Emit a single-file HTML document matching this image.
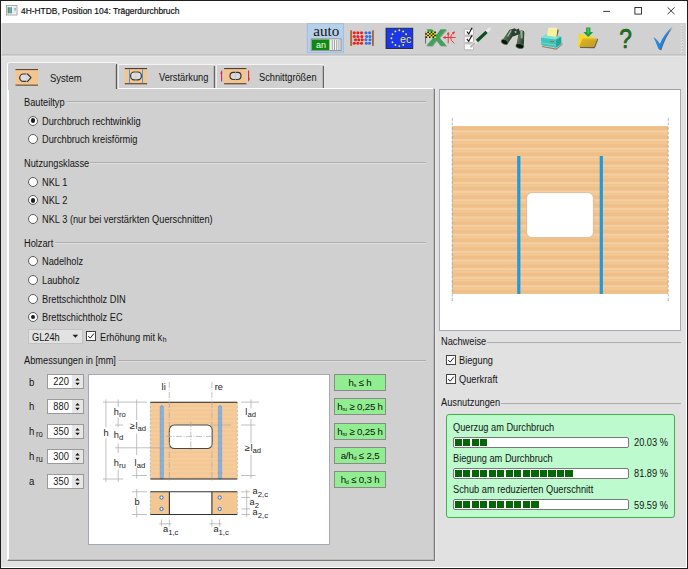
<!DOCTYPE html>
<html lang="de">
<head>
<meta charset="utf-8">
<title>4H-HTDB, Position 104: Trägerdurchbruch</title>
<style>
*{box-sizing:border-box;margin:0;padding:0}
html,body{width:688px;height:569px;overflow:hidden;background:#e1e1e1}
body{font-family:"Liberation Sans",sans-serif;font-size:9.24px;color:#151515;position:relative}
.abs{position:absolute}
.t{position:absolute;white-space:nowrap;line-height:11px;height:11px;font-size:10px;transform:scaleX(0.924);transform-origin:0 50%}
#win{position:absolute;left:0;top:0;width:688px;height:569px;background:#e1e1e1}
#titlebar{position:absolute;left:1px;top:1px;width:686px;height:22px;background:#fff}
#title{position:absolute;left:21px;top:5px;font-size:9.500px;line-height:12px;white-space:nowrap;color:#0a0a0a;transform-origin:0 0;transform:scaleX(0.885);-webkit-text-stroke:0.200px #111}
#toolbar{position:absolute;left:1px;top:23px;width:686px;height:31px;background:#d1d1d1}
#tbline{position:absolute;left:1px;top:54px;width:686px;height:3px;background:linear-gradient(180deg,#c1c1c1 0,#c1c1c1 1px,#d0d0d0 1px,#d0d0d0 2px,#e6e6e6 2px,#e6e6e6 3px)}
.bd{position:absolute;background:#1f1f1f}
.hl{position:absolute;background:#fff}
.grp{position:absolute;height:2px;background:linear-gradient(180deg,#adadad 0,#adadad 1px,#dedede 1px,#dedede 2px)}
.radio{position:absolute;width:10px;height:10px;border-radius:50%;border:1px solid #5c5c5c;background:#fff}
.radio.on::after{content:"";position:absolute;left:1.600px;top:1.600px;width:4.800px;height:4.800px;border-radius:50%;background:#1c1c1c}
.chk{position:absolute;width:10px;height:10px;border:1px solid #444;background:#fff}
.spin{position:absolute;left:47px;width:36.500px;height:14.500px;background:#fff;border:1px solid #9a9a9a}
.spin .v{position:absolute;right:13.400px;top:1.200px;font-size:10.700px;line-height:11px;transform:scaleX(0.870);transform-origin:100% 50%}
.spin .s{position:absolute;right:0;top:0;width:11px;height:12.500px;background:#e6e6e6}
.gbtn{position:absolute;left:334px;width:52px;height:17px;background:#90ee90;border:1px solid #8a8a8a;text-align:center;font-size:9.7px;line-height:15px;white-space:nowrap;color:#111;letter-spacing:-0.200px;word-spacing:0px}
.gbtn sub{font-size:5.5px;vertical-align:baseline;position:relative;top:1px}
.bar{position:absolute;left:453px;width:176px;height:11px;background:#fff;border:1px solid #787878;border-radius:2px}
.bar i{position:absolute;top:1px;left:1px;height:7px;background:repeating-linear-gradient(90deg,#056608 0,#056608 7px,transparent 7px,transparent 8.5px)}
</style>
</head>
<body>
<div id="win">
  <div id="titlebar"></div>
  <div id="title">4H-HTDB, Position 104: Trägerdurchbruch</div>
  <div id="toolbar"></div>
  <div id="tbline"></div>
  <div class="abs" style="left:1px;top:23px;width:1px;height:32px;background:#e6e6e6"></div>

  <!-- title icon -->
  <svg class="abs" style="left:6px;top:5px" width="12" height="11" viewBox="0 0 12 11">
    <rect x="0.5" y="0.5" width="10.5" height="9.5" fill="#f4f4f4" stroke="#9a9a9a" stroke-width="0.8"/>
    <rect x="1.600" y="2.200" width="2.200" height="6.200" fill="#4a9a70"/>
    <rect x="4.200" y="2.200" width="1.800" height="6.200" fill="#5a8fc4"/>
    <rect x="7" y="2.5" width="3" height="5.5" fill="#e8e8e8"/>
    <rect x="8.6" y="3" width="0.9" height="2.4" fill="#3aa35a"/>
  </svg>
  <!-- window controls -->
  <svg class="abs" style="left:596px;top:1px" width="90" height="22" viewBox="0 0 90 22">
    <path d="M7.2 10.4H14" stroke="#222" stroke-width="0.9" fill="none"/>
    <rect x="38.9" y="6.5" width="6.6" height="6.6" fill="none" stroke="#222" stroke-width="0.9"/>
    <path d="M71.6 6.4L78.6 13.2M78.6 6.4L71.6 13.2" stroke="#222" stroke-width="0.9" fill="none"/>
  </svg>

  <!-- tab panel -->
  <div class="abs" id="panel" style="left:7px;top:88px;width:428px;height:473px;background:#d0d0d0"></div>
  <div class="hl" style="left:7px;top:88px;width:426px;height:1px"></div>
  <div class="hl" style="left:7px;top:64px;width:1.5px;height:496px"></div>
  <div class="abs" style="left:433px;top:89px;width:1px;height:471px;background:#bcbcbc"></div>
  <div class="abs" style="left:434px;top:89px;width:1px;height:472px;background:#7a7a7a"></div>
  <div class="abs" style="left:435px;top:89px;width:1px;height:472px;background:#e8e8e8"></div>
  <div class="abs" style="left:8px;top:559px;width:426px;height:1px;background:#bcbcbc"></div>
  <div class="abs" style="left:8px;top:560px;width:427px;height:1px;background:#7a7a7a"></div>
  <!-- inactive tabs -->
  <div class="abs" style="left:118px;top:64px;width:98px;height:24px;background:#d0d0d0;border-top:1px solid #f4f4f4;border-left:1px solid #ececec;border-radius:2px 2px 0 0"></div>
  <div class="abs" style="left:214.300px;top:66px;width:1.100px;height:22px;background:#666"></div>
  <div class="abs" style="left:213.300px;top:66px;width:1px;height:22px;background:#b8b8b8"></div>
  <div class="abs" style="left:216px;top:64px;width:108px;height:24px;background:#d0d0d0;border-top:1px solid #f4f4f4;border-left:1px solid #ececec;border-radius:2px 2px 0 0"></div>
  <div class="abs" style="left:322.800px;top:66px;width:1.100px;height:22px;background:#666"></div>
  <div class="abs" style="left:321.800px;top:66px;width:1px;height:22px;background:#b8b8b8"></div>
  <!-- active tab -->
  <div class="abs" style="left:7px;top:62px;width:111px;height:28px;background:#d0d0d0;border-top:1px solid #f6f6f6;border-left:1.500px solid #fff;border-radius:3px 3px 0 0"></div>
  <div class="abs" style="left:116.300px;top:64px;width:1.200px;height:25px;background:#5a5a5a"></div>
  <div class="abs" style="left:115.300px;top:65px;width:1px;height:24px;background:#b8b8b8"></div>
  <!-- tab labels -->
  <div class="t" style="left:49.5px;top:73px;font-size:10.300px">System</div>
  <div class="t" style="left:159px;top:72px">Verstärkung</div>
  <div class="t" style="left:258.5px;top:72px">Schnittgrößen</div>
  <!-- tab icons -->
  <svg class="abs" style="left:15px;top:68px" width="24" height="19" viewBox="0 0 24 19">
    <rect x="0.5" y="1" width="22.5" height="16.6" fill="#f4c58e"/>
    <rect x="0.5" y="1" width="22.5" height="1.1" fill="#5a4a3a"/>
    <rect x="0.5" y="16.6" width="22.5" height="1.1" fill="#5a4a3a"/>
    <path d="M8.400 6h4.200l3.400 3.700-3.400 3.700H8.400a3.700 3.700 0 0 1 0-7.400z" fill="#dedede" stroke="#333" stroke-width="1.200" stroke-linejoin="round"/>
    <path d="M11.4 4.6v10.6" stroke="#c9c9c9" stroke-width="0.7"/>
  </svg>
  <svg class="abs" style="left:124px;top:67px" width="24" height="19" viewBox="0 0 24 19">
    <rect x="0.8" y="1" width="22.3" height="16.2" fill="#f4c58e"/>
    <rect x="0.8" y="1" width="22.3" height="1.1" fill="#4a4038"/>
    <rect x="0.8" y="16.2" width="22.3" height="1.1" fill="#4a4038"/>
    <path d="M5.500 2.200v14M18.500 2.200v14" stroke="#4a9be0" stroke-width="1"/>
    <rect x="6.600" y="5" width="10.800" height="7.800" rx="3.600" fill="#dedede" stroke="#333" stroke-width="1.150"/>
    <path d="M11.9 3.5v11" stroke="#bdbdbd" stroke-width="0.7"/>
  </svg>
  <svg class="abs" style="left:219px;top:67px" width="33" height="19" viewBox="0 0 33 19">
    <rect x="5.1" y="1" width="22.3" height="16.2" fill="#f4c58e"/>
    <rect x="5.1" y="1" width="22.3" height="1.1" fill="#4a4038"/>
    <rect x="5.1" y="16.2" width="22.3" height="1.1" fill="#4a4038"/>
    <rect x="11" y="5.300" width="11" height="7.200" rx="3.400" fill="#dadada" stroke="#333" stroke-width="1.150"/>
    <path d="M16.5 3.5v11" stroke="#bdbdbd" stroke-width="0.7"/>
    <path d="M2.6 14.5V4.5" stroke="#f02020" stroke-width="1.100"/>
    <path d="M3.100 2.800L1.200 6.800h1.900z" fill="#f02020"/>
    <path d="M29.6 3.5v10" stroke="#f02020" stroke-width="1.100"/>
    <path d="M29.100 15.200l1.900-4h-1.900z" fill="#f02020"/>
  </svg>

  <!-- left panel content -->
  <div class="t" style="left:23.5px;top:96.6px">Bauteiltyp</div>
  <div class="grp" style="left:66.5px;top:101.1px;width:359.500px"></div>
  <div class="t" style="left:23.5px;top:157.9px">Nutzungsklasse</div>
  <div class="grp" style="left:90px;top:162.4px;width:336px"></div>
  <div class="t" style="left:23.5px;top:237.6px">Holzart</div>
  <div class="grp" style="left:55px;top:242.1px;width:371px"></div>
  <div class="t" style="left:23.5px;top:355.3px">Abmessungen in [mm]</div>
  <div class="grp" style="left:118px;top:359.8px;width:308px"></div>
  <div class="radio on" style="left:28px;top:115.6px"></div><div class="t" style="left:42px;top:115.6px">Durchbruch rechtwinklig</div>
  <div class="radio" style="left:28px;top:134.1px"></div><div class="t" style="left:42px;top:134.1px">Durchbruch kreisförmig</div>
  <div class="radio" style="left:28px;top:177.0px"></div><div class="t" style="left:42px;top:177.0px">NKL 1</div>
  <div class="radio on" style="left:28px;top:195.4px"></div><div class="t" style="left:42px;top:195.4px">NKL 2</div>
  <div class="radio" style="left:28px;top:214.0px"></div><div class="t" style="left:42px;top:214.0px">NKL 3 (nur bei verstärkten Querschnitten)</div>
  <div class="radio" style="left:28px;top:256.4px"></div><div class="t" style="left:42px;top:256.4px">Nadelholz</div>
  <div class="radio" style="left:28px;top:275.0px"></div><div class="t" style="left:42px;top:275.0px">Laubholz</div>
  <div class="radio" style="left:28px;top:293.5px"></div><div class="t" style="left:42px;top:293.5px">Brettschichtholz DIN</div>
  <div class="radio on" style="left:28px;top:312.0px"></div><div class="t" style="left:42px;top:312.0px">Brettschichtholz EC</div>
  <div class="abs" style="left:28px;top:329px;width:55px;height:15px;background:#e2e2e2;border:1px solid #c2c2c2"></div>
  <div class="t" style="left:32px;top:331.7px">GL24h</div>
  <svg class="abs" style="left:72px;top:334px" width="7" height="5" viewBox="0 0 7 5"><path d="M0.6 0.8h5.6L3.4 3.8z" fill="#1a1a1a"/></svg>
  <div class="chk" style="left:86px;top:331px"></div>
  <svg class="abs" style="left:86px;top:331px" width="10" height="10" viewBox="0 0 10 10"><path d="M2.2 5l2 2.2 3.6-4.6" fill="none" stroke="#222" stroke-width="1"/></svg>
  <div class="t" style="left:100px;top:331.7px">Erhöhung mit k<span style="font-size:7.800px;position:relative;top:1.600px;margin-left:0.300px">h</span></div>
  <div class="t" style="left:28.5px;top:376.5px;font-size:10.400px">b</div>
  <div class="spin" style="top:374.3px"><span class="v">220</span><span class="s"><svg width="11" height="13" viewBox="0 0 11 13" style="position:absolute;left:0;top:-0.500px"><path d="M3.3 5.4L5.5 2.9 7.700 5.400zM3.300 7.800L5.500 10.300 7.700 7.800z" fill="#111"/></svg></span></div>
  <div class="t" style="left:28.5px;top:401.4px;font-size:10.400px">h</div>
  <div class="spin" style="top:399.2px"><span class="v">880</span><span class="s"><svg width="11" height="13" viewBox="0 0 11 13" style="position:absolute;left:0;top:-0.500px"><path d="M3.3 5.4L5.5 2.9 7.700 5.400zM3.300 7.800L5.500 10.300 7.700 7.800z" fill="#111"/></svg></span></div>
  <div class="t" style="left:28.5px;top:426.4px;font-size:10.400px">h<span style="font-size:8.300px;position:relative;top:1.300px;margin-left:1.800px">ro</span></div>
  <div class="spin" style="top:424.2px"><span class="v">350</span><span class="s"><svg width="11" height="13" viewBox="0 0 11 13" style="position:absolute;left:0;top:-0.500px"><path d="M3.3 5.4L5.5 2.9 7.700 5.400zM3.300 7.800L5.500 10.300 7.700 7.800z" fill="#111"/></svg></span></div>
  <div class="t" style="left:28.5px;top:451.3px;font-size:10.400px">h<span style="font-size:8.300px;position:relative;top:1.300px;margin-left:1.800px">ru</span></div>
  <div class="spin" style="top:449.1px"><span class="v">300</span><span class="s"><svg width="11" height="13" viewBox="0 0 11 13" style="position:absolute;left:0;top:-0.500px"><path d="M3.3 5.4L5.5 2.9 7.700 5.400zM3.300 7.800L5.500 10.300 7.700 7.800z" fill="#111"/></svg></span></div>
  <div class="t" style="left:28.5px;top:476.2px;font-size:10.400px">a</div>
  <div class="spin" style="top:474.0px"><span class="v">350</span><span class="s"><svg width="11" height="13" viewBox="0 0 11 13" style="position:absolute;left:0;top:-0.500px"><path d="M3.3 5.4L5.5 2.9 7.700 5.400zM3.300 7.800L5.500 10.300 7.700 7.800z" fill="#111"/></svg></span></div>
  <div class="gbtn" style="top:374.3px">h<sub>s</sub> ≤ h</div>
  <div class="gbtn" style="top:398.4px">h<sub>ru</sub> ≥ 0,25 h</div>
  <div class="gbtn" style="top:422.5px">h<sub>ro</sub> ≥ 0,25 h</div>
  <div class="gbtn" style="top:446.6px">a/h<sub>d</sub> ≤ 2,5</div>
  <div class="gbtn" style="top:470.7px">h<sub>d</sub> ≤ 0,3 h</div>

  <!-- diagram -->
  <svg class="abs" style="left:88px;top:374px" width="242" height="171" viewBox="88 374 242 171" font-family="Liberation Sans, sans-serif" fill="#222">
    <defs>
      <linearGradient id="lam" x1="0" y1="0" x2="0" y2="1">
        <stop offset="0" stop-color="#f2c692"/><stop offset="0.45" stop-color="#f6ce9f"/><stop offset="0.8" stop-color="#f4c997"/><stop offset="1" stop-color="#f2c692"/>
      </linearGradient>
      <pattern id="wood1" x="0" y="402" width="10" height="4.2" patternUnits="userSpaceOnUse">
        <rect x="0" y="0" width="10" height="4.2" fill="url(#lam)"/>
      </pattern>
    </defs>
    <rect x="88.5" y="374.5" width="241" height="170" fill="#fff" stroke="#a4aab4" stroke-width="1"/>
    <!-- elevation -->
    <rect x="150.4" y="402" width="86.9" height="77" fill="url(#wood1)"/>
    <path d="M150.4 402V479M237.3 402V479" stroke="#b4b4b4" stroke-width="0.8" stroke-dasharray="2.5 1.5" fill="none"/>
    <g stroke="#b0b0b0" stroke-width="0.8" fill="none">
      <path d="M103 402.1H147M103 479H123M132 475.500H147M115 425H123M115 447.800H170.600M211.500 425H231"/>
      <path d="M105.900 399.500V427.500M105.900 438.500V482M118.200 399.500V407M118.200 417.500V427M118.200 443.500V453M118.200 469.500V482M136.700 399.500V420M136.700 433.500V455M136.700 468V478.500"/>
      <path d="M241 402.100H259M241 425H255.500M241 475.500H255.500M251 399.500V408.500M251 419V443.500M251 454.500V478.500"/>
      <path d="M132 491.800H147M132 514.500H147M136.700 489V517.500"/>
      <path d="M241.400 491.800H250M241.400 497.500H250M241.400 508.900H250M241.400 514.500H250M246.700 489.500V517"/>
      <path d="M159.200 523.800H171.500M161.500 519.400V526.500M169.400 519.400V526.500"/>
      <path d="M209.400 523.800H221.700M211.900 519.400V526.500M219.600 519.400V526.500"/>
    </g>
    <!-- bars -->
    <rect x="160.2" y="405.6" width="3.2" height="73.400" rx="1.600" fill="#86b3e2" stroke="#4f86c2" stroke-width="0.700" stroke-dasharray="0.700 0.500"/>
    <rect x="218.400" y="405.600" width="3.200" height="73.400" rx="1.600" fill="#86b3e2" stroke="#4f86c2" stroke-width="0.700" stroke-dasharray="0.700 0.500"/>
    <path d="M150.400 402.200H237.300M150.400 479H237.300" stroke="#222" stroke-width="1.100" fill="none"/>
    <!-- hole -->
    <rect x="169.400" y="425" width="42.800" height="23.500" rx="5" fill="#fff" stroke="#4a4a4a" stroke-width="1.100"/>
    <g stroke="#a8a8a8" stroke-width="0.700" fill="none" stroke-dasharray="6 1.500 1 1.500">
      <path d="M169.300 382V482M211.900 382V482M166 436.400H215.500M190.800 421.500V450.500"/>
    </g>
    <!-- plan -->
    <rect x="150.400" y="491.800" width="19" height="22.700" fill="#f3c692"/>
    <rect x="211.900" y="491.800" width="25.400" height="22.700" fill="#f3c692"/>
    <path d="M150.400 491.800V514.500M237.300 491.800V514.500" stroke="#b4b4b4" stroke-width="0.800" stroke-dasharray="2.500 1.500" fill="none"/>
    <path d="M150.400 491.800H237.300M150.400 514.500H237.300M169.400 491.800V514.500M211.900 491.800V514.500" stroke="#333" stroke-width="1.100" fill="none"/>
    <g fill="#dfeaf8" stroke="#2f6ec2" stroke-width="0.950">
      <circle cx="161.500" cy="497.500" r="1.650"/><circle cx="161.500" cy="508.900" r="1.650"/>
      <circle cx="219.700" cy="497.500" r="1.650"/><circle cx="219.700" cy="508.900" r="1.650"/>
    </g>
    <!-- labels -->
    <g font-size="9.300" stroke="#fff" stroke-width="1.500" paint-order="stroke" stroke-linejoin="round">
      <text x="161.600" y="390.200">li</text>
      <text x="214.700" y="390.200">re</text>
      <text x="103.600" y="436">h</text>
      <text x="113.800" y="414.800">h<tspan font-size="7.700" dy="2.200">ro</tspan></text>
      <text x="113.800" y="437.600">h<tspan font-size="7.700" dy="2.200">d</tspan></text>
      <text x="113.800" y="465.500">h<tspan font-size="7.700" dy="2.200">ru</tspan></text>
      <text x="129.600" y="428.800">≥<tspan dx="0.800">l</tspan><tspan font-size="7.700" dy="2.200">ad</tspan></text>
      <text x="134.600" y="465.500">l<tspan font-size="7.700" dy="2.200">ad</tspan></text>
      <text x="245.300" y="414.800">l<tspan font-size="7.700" dy="2.200">ad</tspan></text>
      <text x="244.600" y="450.500">≥<tspan dx="0.800">l</tspan><tspan font-size="7.700" dy="2.200">ad</tspan></text>
      <text x="134.400" y="505.400">b</text>
      <text x="252.600" y="493.600">a<tspan font-size="7.700" dy="3">2,c</tspan></text>
      <text x="249.600" y="504.500">a<tspan font-size="7.700" dy="3">2</tspan></text>
      <text x="252.600" y="515.400">a<tspan font-size="7.700" dy="3">2,c</tspan></text>
      <text x="163" y="531.700">a<tspan font-size="7.700" dy="3">1,c</tspan></text>
      <text x="213.400" y="531.700">a<tspan font-size="7.700" dy="3">1,c</tspan></text>
    </g>
  </svg>

  <!-- preview -->
  <div class="abs" style="left:439px;top:89px;width:242px;height:242px;background:#fff;border:1px solid #a6aab2;border-top-color:#9a9ea6"></div>
  <div class="abs" style="left:452.3px;top:126.3px;width:215.9px;height:167.7px;background:repeating-linear-gradient(180deg,#f5cfa4 -3.25px,#f5cfa4 -2.45px,#ecc490 -1.65px,#f8c893 -0.35px,#f2c38d 0.65px,#eebf88 1.55px,#eebf88 3.65px,#f4cb9d 4.75px,#f5cfa4 5.35px)"></div>
  <svg class="abs" style="left:439px;top:89px" width="243" height="243" viewBox="439 89 243 243">
    <defs>
      <linearGradient id="lam2" x1="0" y1="0" x2="0" y2="1">
        <stop offset="0" stop-color="#f5cfa4"/><stop offset="0.09" stop-color="#f5cfa4"/><stop offset="0.19" stop-color="#ecc490"/><stop offset="0.34" stop-color="#f8c893"/><stop offset="0.46" stop-color="#f2c38d"/><stop offset="0.56" stop-color="#eebf88"/><stop offset="0.8" stop-color="#eebf88"/><stop offset="0.93" stop-color="#f4cb9d"/><stop offset="1" stop-color="#f5cfa4"/>
      </linearGradient>
      <pattern id="wood2" x="0" y="130.900" width="10" height="8.600" patternUnits="userSpaceOnUse">
        <rect x="0" y="0" width="10" height="8.600" fill="url(#lam2)"/>
      </pattern>
    </defs>
    <path d="M452.300 118V302M668.200 118V302" stroke="#9a9a9a" stroke-width="0.700" stroke-dasharray="3 1.500" fill="none"/>
    <rect x="517.200" y="156" width="3.200" height="138" fill="#1e9bdc"/>
    <rect x="599.700" y="156" width="3.200" height="138" fill="#1e9bdc"/>
    <rect x="526.600" y="192.600" width="66.800" height="45" rx="5.500" fill="#fff" stroke="#d8b48a" stroke-width="0.800"/>
  </svg>
  <!-- Nachweise -->
  <div class="t" style="left:441px;top:335.900px">Nachweise</div>
  <div class="grp" style="left:487px;top:341.500px;width:194px"></div>
  <div class="chk" style="left:446px;top:355px"></div>
  <svg class="abs" style="left:446px;top:355px" width="10" height="10" viewBox="0 0 10 10"><path d="M2.200 5l2 2.200 3.600-4.600" fill="none" stroke="#222" stroke-width="1"/></svg>
  <div class="t" style="left:458.500px;top:354.800px">Biegung</div>
  <div class="chk" style="left:446px;top:373.700px"></div>
  <svg class="abs" style="left:446px;top:373.700px" width="10" height="10" viewBox="0 0 10 10"><path d="M2.200 5l2 2.200 3.600-4.600" fill="none" stroke="#222" stroke-width="1"/></svg>
  <div class="t" style="left:458.500px;top:373.500px">Querkraft</div>
  <!-- Ausnutzungen -->
  <div class="t" style="left:441px;top:397px">Ausnutzungen</div>
  <div class="grp" style="left:501px;top:402.500px;width:180px"></div>
  <div class="abs" style="left:446px;top:414px;width:229px;height:104px;background:#bdfacd;border:1px solid #45b04a;border-radius:3px"></div>
  <div class="t" style="left:453px;top:422px">Querzug am Durchbruch</div>
  <div class="bar" style="top:437px"><i style="width:33.800px"></i></div>
  <div class="t" style="left:633.500px;top:437.300px">20.03 %</div>
  <div class="t" style="left:453px;top:453px">Biegung am Durchbruch</div>
  <div class="bar" style="top:468px"><i style="width:118.500px"></i></div>
  <div class="t" style="left:633.500px;top:468.300px">81.89 %</div>
  <div class="t" style="left:453px;top:484.200px">Schub am reduzierten Querschnitt</div>
  <div class="bar" style="top:499.300px"><i style="width:84.500px"></i></div>
  <div class="t" style="left:633.500px;top:499.600px">59.59 %</div>

  <!-- toolbar icons -->
  <svg class="abs" style="left:1px;top:23px" width="686" height="31" viewBox="1 23 686 31" font-family="Liberation Sans, sans-serif">
    <defs>
      <linearGradient id="gchk" x1="0" y1="0" x2="1" y2="1"><stop offset="0" stop-color="#29a8f8"/><stop offset="1" stop-color="#0f6fe0"/></linearGradient>
      <linearGradient id="gfold" x1="0" y1="0" x2="1" y2="1"><stop offset="0" stop-color="#dcb42c"/><stop offset="1" stop-color="#c39c18"/></linearGradient>
      <linearGradient id="gtube" x1="0" y1="0" x2="1" y2="0.300"><stop offset="0" stop-color="#2c4233"/><stop offset="0.400" stop-color="#56725e"/><stop offset="1" stop-color="#27382c"/></linearGradient>
    </defs>
    <!-- auto button -->
    <rect x="307.3" y="23.600" width="36.200" height="29" fill="#b7d0ea" stroke="#9cbfe3" stroke-width="1"/>
    <text x="313.300" y="35.800" font-family="Liberation Serif, serif" font-size="14" fill="#111" textLength="26" lengthAdjust="spacingAndGlyphs">auto</text>
    <rect x="311.200" y="38.900" width="29.800" height="11.700" fill="#f4f4f4" stroke="#8a8a8a" stroke-width="0.900"/>
    <rect x="311.800" y="39.500" width="17.600" height="10.500" fill="#0e8a10"/>
    <text x="316" y="47.600" font-size="9.300" fill="#f2fff2" textLength="10" lengthAdjust="spacingAndGlyphs">an</text>
    <path d="M332.300 40V50M334.500 40V50M336.700 40V50M338.900 40V50" stroke="#9a9a9a" stroke-width="0.900" fill="none"/>
    <!-- abacus -->
    <rect x="350.200" y="30.300" width="1.900" height="15.600" fill="#a8683a"/>
    <rect x="372" y="30.300" width="1.900" height="15.600" fill="#a8683a"/>
    <path d="M352 32.800H372M352 36.400H372M352 39.800H372M352 43.300H372" stroke="#c8a890" stroke-width="0.600"/>
    <circle cx="354.3" cy="32.8" r="1.500" fill="#f01c1c"/><circle cx="357.9" cy="32.8" r="1.500" fill="#f01c1c"/><circle cx="361.5" cy="32.8" r="1.500" fill="#f01c1c"/><circle cx="366" cy="32.8" r="1.500" fill="#2e70f2"/><circle cx="369.6" cy="32.8" r="1.500" fill="#2e70f2"/><circle cx="354.3" cy="36.4" r="1.500" fill="#f01c1c"/><circle cx="357.9" cy="36.4" r="1.500" fill="#f01c1c"/><circle cx="361.9" cy="36.4" r="1.500" fill="#f01c1c"/><circle cx="366.6" cy="36.4" r="1.500" fill="#2e70f2"/><circle cx="369.9" cy="36.4" r="1.500" fill="#2e70f2"/><circle cx="355.5" cy="39.8" r="1.500" fill="#f01c1c"/><circle cx="358.8" cy="39.8" r="1.500" fill="#f01c1c"/><circle cx="362.2" cy="39.8" r="1.500" fill="#f01c1c"/><circle cx="365.9" cy="39.8" r="1.500" fill="#2e70f2"/><circle cx="370" cy="39.8" r="1.500" fill="#2e70f2"/><circle cx="354.3" cy="43.3" r="1.500" fill="#f01c1c"/><circle cx="357.9" cy="43.3" r="1.500" fill="#f01c1c"/><circle cx="361.5" cy="43.3" r="1.500" fill="#f01c1c"/><circle cx="366.4" cy="43.3" r="1.500" fill="#2e70f2"/><circle cx="369.5" cy="43.3" r="1.500" fill="#2e70f2"/>
    <!-- EU flag -->
    <rect x="385.200" y="27.500" width="28.200" height="21.700" fill="#e9e9e9"/>
    <rect x="386" y="28.200" width="26.800" height="20.300" fill="#1c36ea" stroke="#20242c" stroke-width="0.900"/>
    <g fill="#f0f040"><circle cx="399.3" cy="30.3" r="0.95"/><circle cx="403.2" cy="31.4" r="0.95"/><circle cx="406.1" cy="34.2" r="0.95"/><circle cx="403.2" cy="45.0" r="0.95"/><circle cx="399.3" cy="46.1" r="0.95"/><circle cx="395.4" cy="45.0" r="0.95"/><circle cx="392.5" cy="42.2" r="0.95"/><circle cx="391.4" cy="38.2" r="0.95"/><circle cx="392.5" cy="34.2" r="0.95"/><circle cx="395.4" cy="31.4" r="0.95"/></g>
    <text x="400" y="42.800" font-size="11.600" fill="#eaea3c" textLength="11.200" lengthAdjust="spacingAndGlyphs">ec</text>
    <!-- green X -->
    <path d="M427.300 30h5.800l4.200 5.600 4.200-5.600h5.700l-7 8.300 7 8.300h-5.900l-4.100-5.600-4.200 5.600h-5.800l7.100-8.300z" fill="#868686" opacity="0.750"/>
    <path d="M426.400 29.200h5.800l4.200 5.600 4.200-5.600h5.700l-7 8.300 7 8.300h-5.900l-4.100-5.600-4.200 5.600h-5.800l7.100-8.300z" fill="#3fa258"/>
    <path d="M425.500 31.600V43.600" stroke="#555" stroke-width="0.800"/>
    <rect x="425.50" y="31.60" width="1.75" height="1.6" fill="#f4ec20"/><rect x="425.50" y="33.20" width="1.75" height="1.6" fill="#1a1a10"/><rect x="425.50" y="34.80" width="1.75" height="1.6" fill="#f4ec20"/><rect x="425.50" y="36.40" width="1.75" height="1.6" fill="#1a1a10"/><rect x="427.25" y="31.60" width="1.75" height="1.6" fill="#1a1a10"/><rect x="427.25" y="33.20" width="1.75" height="1.6" fill="#f4ec20"/><rect x="427.25" y="34.80" width="1.75" height="1.6" fill="#1a1a10"/><rect x="427.25" y="36.40" width="1.75" height="1.6" fill="#f4ec20"/><rect x="429.00" y="31.60" width="1.75" height="1.6" fill="#f4ec20"/><rect x="429.00" y="33.20" width="1.75" height="1.6" fill="#1a1a10"/><rect x="429.00" y="34.80" width="1.75" height="1.6" fill="#f4ec20"/><rect x="429.00" y="36.40" width="1.75" height="1.6" fill="#1a1a10"/><rect x="430.75" y="31.60" width="1.75" height="1.6" fill="#1a1a10"/><rect x="430.75" y="33.20" width="1.75" height="1.6" fill="#f4ec20"/><rect x="430.75" y="34.80" width="1.75" height="1.6" fill="#1a1a10"/><rect x="430.75" y="36.40" width="1.75" height="1.6" fill="#f4ec20"/><rect x="432.50" y="31.60" width="1.75" height="1.6" fill="#f4ec20"/><rect x="432.50" y="33.20" width="1.75" height="1.6" fill="#1a1a10"/><rect x="432.50" y="34.80" width="1.75" height="1.6" fill="#f4ec20"/><rect x="432.50" y="36.40" width="1.75" height="1.6" fill="#1a1a10"/><rect x="434.25" y="31.60" width="1.75" height="1.6" fill="#1a1a10"/><rect x="434.25" y="33.20" width="1.75" height="1.6" fill="#f4ec20"/><rect x="434.25" y="34.80" width="1.75" height="1.6" fill="#1a1a10"/><rect x="434.25" y="36.40" width="1.75" height="1.6" fill="#f4ec20"/>
    <g stroke="#f02828" stroke-width="0.900" fill="none">
      <path d="M444 37.500H455.600M448.200 33.500V43.300"/>
      <path d="M454.200 32.200Q450.600 34.500 450.600 37.500T454.200 43.300"/>
    </g>
    <path d="M442.600 37.500l3-1.500v3zM448.200 31.800l-1.400 2.800h2.800zM455 31.600l-2.900 0.600 1.800 2.200z" fill="#f02828"/>
    <!-- checklist -->
    <g fill="#fff" stroke="#adadad" stroke-width="0.800">
      <rect x="464.300" y="29.200" width="9.200" height="5.800" rx="0.800"/><rect x="464.300" y="36.700" width="9.200" height="5.600" rx="0.800"/><rect x="464.300" y="44" width="9.200" height="5.800" rx="0.800"/>
    </g>
    <path d="M466.800 31.500l1.900 2.400 3.400-6.200M466.800 38.800l1.900 2.400 3.400-6" stroke="#111" stroke-width="1.100" fill="none"/>
    <path d="M489.300 29.200L471.300 46.400" stroke="#e9e9e9" stroke-width="3" stroke-linecap="round"/>
    <path d="M474.500 43.300L471 46.600" stroke="#b9b0a8" stroke-width="1.800" stroke-linecap="round"/>
    <path d="M486.600 31.800L476.900 41" stroke="#0f4a20" stroke-width="3.200"/>
    <!-- binoculars -->
    <g stroke="#ddd6c8" stroke-width="1.300" stroke-linejoin="round">
      <path d="M508.900 29.300Q511 27.800 513.800 29.300L514.500 35L508.200 44.200Q503.500 44.500 501.200 40.600z" fill="url(#gtube)"/>
      <path d="M518.400 30.400Q521.500 28.600 524.600 30.800L525.300 34L524.200 47.300Q519.500 50 515.600 45.600z" fill="url(#gtube)"/>
    </g>
    <path d="M511.500 29.500l3-1.300 2 1.200 2.500-1 1 5.600-7 2.500z" fill="#2a4031"/>
    <path d="M514.300 31.600l1.800-0.900 0.800 1.600-1.600 0.900z" fill="#9fb8a6"/>
    <path d="M510.300 30.200l1.600 0.400-3.600 6.200-1.300-0.600zM520.300 30.600l2.200 0.200 0.200 7.500-1.900 0.100z" fill="#a9c4b0" opacity="0.800"/>
    <path d="M524.300 33.200l0.900 0.800-0.400 6-0.900-0.200z" fill="#c6d8cc" opacity="0.800"/>
    <ellipse cx="504.600" cy="42" rx="3.700" ry="2.300" transform="rotate(28 504.600 42)" fill="#0b130d" stroke="#5d8c62" stroke-width="0.600"/>
    <ellipse cx="519.800" cy="46.100" rx="4.100" ry="2.400" transform="rotate(12 519.800 46.100)" fill="#0b130d" stroke="#5d8c62" stroke-width="0.600"/>
    <!-- printer -->
    <path d="M542.300 46l13.800 2.600 5.600-4.200 0.200-3.500 0.600 3.900-6.200 4.900-14.300-2.700z" fill="#8e6a48" opacity="0.800"/>
    <path d="M541 38.400Q541 37.600 541.800 37.200L546.500 34.500L559.900 36.300Q561.400 36.700 561.300 38L561.200 43.600Q561.200 44.500 560.400 45L556.600 47.400Q555.800 47.800 554.800 47.600L542.600 45.500Q541.200 45.200 541.200 44z" fill="#3fc6bb"/>
    <path d="M541.200 37.700L546.600 34.500L560 36.400L556.200 39.400z" fill="#80e2da"/>
    <path d="M556.200 39.400L561.200 36.900L561.200 43.800L556.200 47.500z" fill="#2aa499"/>
    <path d="M541.400 42.800L556 45.200" stroke="#7fe0d6" stroke-width="0.700" fill="none"/>
    <path d="M557 29.200Q558.600 29 558.600 30.500L557.400 36.200L556 36.800z" fill="#6a5a48"/>
    <path d="M548.300 28.300L556.500 28.100Q557.900 28.300 557.400 29.800L556.400 37L546.900 35.600z" fill="#f6f29c"/>
    <path d="M548.300 28.300L556.500 28.100" stroke="#fbf9d8" stroke-width="0.700"/>
    <rect x="550.200" y="41" width="3.700" height="1.200" fill="#ae6846"/>
    <!-- folder -->
    <path d="M580.200 48.100l14.600 0.100 3.400-8.700-1-0.900-3.500 8.300-13.800 0.100z" fill="#3a3a3a" opacity="0.750"/>
    <path d="M578.700 34.600Q578.700 34 579.300 34h3.700l2.200 2.200h7.700q0.600 0 0.600 0.600v10.300h-15.500z" fill="#f8d926"/>
    <path d="M582.500 38.500h14.800l-3.300 8.600h-14.800z" fill="url(#gfold)"/>
    <path d="M582.800 39h14" stroke="#e6c648" stroke-width="0.500"/>
    <path d="M586.100 27.600h4.300v4.500h2.800l-5 4.900-4.900-4.900h2.800z" fill="#1c9c34"/>
    <path d="M587.300 28.200h1.900v5.500h-1.900z" fill="#5cc474" opacity="0.800"/>
    <!-- question mark -->
    <text x="619.900" y="48.100" font-family="Liberation Sans, sans-serif" font-size="27" fill="#8f8676" textLength="12.400" lengthAdjust="spacingAndGlyphs" opacity="0.800">?</text>
    <text x="619.300" y="47.500" font-family="Liberation Sans, sans-serif" font-size="27" fill="#1a7a1e" stroke="#115414" stroke-width="0.600" textLength="12.400" lengthAdjust="spacingAndGlyphs">?</text>
    <!-- check -->
    <path d="M654 37.300Q657.500 40 660.300 44.600Q665 34.500 672.600 27.500Q665.500 37 661.300 50.200Q659.300 50 658.800 48.500Q656.500 42 654 37.300z" fill="#30363c" opacity="0.700"/>
    <path d="M653.300 36.900Q656.800 39.600 659.600 44.200Q664.300 34.100 671.900 27.100Q664.800 36.600 660.600 49.600Q658.600 49.600 658.100 48.100Q655.800 41.600 653.300 36.900z" fill="url(#gchk)"/>
    <rect x="681.4" y="25.10" width="1.1" height="1.1" fill="#fff"/><rect x="682.2" y="25.80" width="0.8" height="0.8" fill="#a8a8a8"/><rect x="681.4" y="27.98" width="1.1" height="1.1" fill="#fff"/><rect x="682.2" y="28.68" width="0.8" height="0.8" fill="#a8a8a8"/><rect x="681.4" y="30.86" width="1.1" height="1.1" fill="#fff"/><rect x="682.2" y="31.56" width="0.8" height="0.8" fill="#a8a8a8"/><rect x="681.4" y="33.74" width="1.1" height="1.1" fill="#fff"/><rect x="682.2" y="34.44" width="0.8" height="0.8" fill="#a8a8a8"/><rect x="681.4" y="36.62" width="1.1" height="1.1" fill="#fff"/><rect x="682.2" y="37.32" width="0.8" height="0.8" fill="#a8a8a8"/><rect x="681.4" y="39.50" width="1.1" height="1.1" fill="#fff"/><rect x="682.2" y="40.20" width="0.8" height="0.8" fill="#a8a8a8"/><rect x="681.4" y="42.38" width="1.1" height="1.1" fill="#fff"/><rect x="682.2" y="43.08" width="0.8" height="0.8" fill="#a8a8a8"/><rect x="681.4" y="45.26" width="1.1" height="1.1" fill="#fff"/><rect x="682.2" y="45.96" width="0.8" height="0.8" fill="#a8a8a8"/><rect x="681.4" y="48.14" width="1.1" height="1.1" fill="#fff"/><rect x="682.2" y="48.84" width="0.8" height="0.8" fill="#a8a8a8"/><rect x="681.4" y="51.02" width="1.1" height="1.1" fill="#fff"/><rect x="682.2" y="51.72" width="0.8" height="0.8" fill="#a8a8a8"/>
  </svg>
  <!-- window border -->
  <div class="bd" style="left:0;top:0;width:688px;height:1px"></div>
  <div class="bd" style="left:0;top:0;width:1px;height:569px"></div>
  <div class="bd" style="left:687px;top:0;width:1px;height:569px"></div>
  <div class="bd" style="left:0;top:568px;width:688px;height:1px"></div>
  <div class="hl" style="left:686px;top:23px;width:1px;height:545px"></div>
  <div class="hl" style="left:1px;top:567px;width:686px;height:1px"></div>
</div>
</body>
</html>
